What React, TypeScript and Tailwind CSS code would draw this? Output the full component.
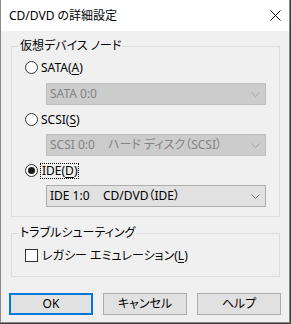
import React from "react";

const font = "font-['Noto_Sans','Noto_Sans_CJK_JP',sans-serif] [font-feature-settings:'palt']";

function Chevron({ disabled }: { disabled?: boolean }) {
  return (
    <svg width="9" height="5" viewBox="0 0 9 5" className="block">
      <path d="M0.5 0.5 L4.5 4.5 L8.5 0.5" fill="none" stroke={disabled ? "#a6a6a6" : "#6d6d6d"} strokeWidth="1" />
    </svg>
  );
}

function Radio({ checked }: { checked?: boolean }) {
  return (
    <div className="w-[13px] h-[13px] rounded-full border border-[#333333] bg-white flex items-center justify-center shrink-0">
      {checked && <div className="w-[7px] h-[7px] rounded-full bg-[#1a1a1a]" />}
    </div>
  );
}

function Select({ disabled, children }: { disabled?: boolean; children: React.ReactNode }) {
  return (
    <div
      className={
        "ml-[21px] w-[220px] h-[22px] flex items-center justify-between pl-[3px] pr-[5px] border text-[12px] " +
        (disabled ? "bg-[#cccccc] border-[#bfbfbf] text-[#838383]" : "bg-[#e1e1e1] border-[#adadad] text-black")
      }
    >
      <div className="flex items-center whitespace-pre leading-none">{children}</div>
      <Chevron disabled={disabled} />
    </div>
  );
}

export default function App() {
  return (
    <div className={"w-[291px] h-[324px] bg-[#3a3a3a] " + font}>
      <div className="w-[290px] h-[323px] bg-[#f0f0f0] border-l border-r border-b border-[#8a8a8a] flex flex-col">
        <div className="h-[31px] bg-white flex items-center justify-between pl-[8px] pr-[8px] shrink-0">
          <span className="text-[12px] text-black leading-none">CD/DVD の詳細設定</span>
          <svg width="11" height="11" viewBox="0 0 11 11" className="block">
            <path d="M0.5 0.5 L10.5 10.5 M10.5 0.5 L0.5 10.5" stroke="#000" strokeWidth="1" fill="none" />
          </svg>
        </div>

        <div className="ml-[10px] mt-[15px] w-[269px] h-[171px] border border-[#dcdcdc] relative pl-[13px] pt-[13px] shrink-0">
          <span className="absolute top-[-9px] left-[7px] px-[1px] bg-[#f0f0f0] text-[12px] leading-[16px] text-black">
            仮想デバイス ノード
          </span>
          <div className="h-[15px] flex items-center gap-[3px] text-[12px] text-black">
            <Radio />
            <span className="leading-none">
              SATA(<span className="underline underline-offset-2">A</span>)
            </span>
          </div>
          <div className="mt-[8px]">
            <Select disabled>SATA 0:0</Select>
          </div>
          <div className="mt-[7px] h-[15px] flex items-center gap-[3px] text-[12px] text-black">
            <Radio />
            <span className="leading-none">
              SCSI(<span className="underline underline-offset-2">S</span>)
            </span>
          </div>
          <div className="mt-[7px]">
            <Select disabled>
              <span className="inline-block w-[58px]">SCSI 0:0</span>
              <span>ハード ディスク（SCSI）</span>
            </Select>
          </div>
          <div className="mt-[7px] h-[15px] flex items-center gap-[2px] text-[12px] text-black">
            <Radio checked />
            <span className="leading-none border border-dotted border-black px-[1px] py-[1px]">
              IDE(<span className="underline underline-offset-2">D</span>)
            </span>
          </div>
          <div className="mt-[7px]">
            <Select>
              <span className="inline-block w-[53px]">IDE 1:0</span>
              <span>CD/DVD（IDE）</span>
            </Select>
          </div>
        </div>

        <div className="ml-[10px] mt-[16px] w-[269px] h-[44px] border border-[#dcdcdc] relative pl-[13px] pt-[14px] shrink-0">
          <span className="absolute top-[-9px] left-[7px] px-[1px] bg-[#f0f0f0] text-[12px] leading-[16px] text-black">
            トラブルシューティング
          </span>
          <div className="h-[15px] flex items-center gap-[4px] text-[12px] text-black">
            <div className="w-[13px] h-[13px] border border-[#333333] bg-white shrink-0" />
            <span className="leading-none">
              レガシー エミュレーション(<span className="underline underline-offset-2">L</span>)
            </span>
          </div>
        </div>

        <div className="ml-[8px] mt-[16px] flex gap-[10px] shrink-0">
          <div className="w-[84px] h-[22px] border-2 border-[#0078d7] bg-[#e1e1e1] flex items-center justify-center text-[12px] text-black leading-none">
            OK
          </div>
          <div className="w-[84px] h-[22px] border border-[#adadad] bg-[#e1e1e1] flex items-center justify-center text-[12px] text-black leading-none">
            キャンセル
          </div>
          <div className="w-[84px] h-[22px] border border-[#adadad] bg-[#e1e1e1] flex items-center justify-center text-[12px] text-black leading-none">
            ヘルプ
          </div>
        </div>
      </div>
    </div>
  );
}
